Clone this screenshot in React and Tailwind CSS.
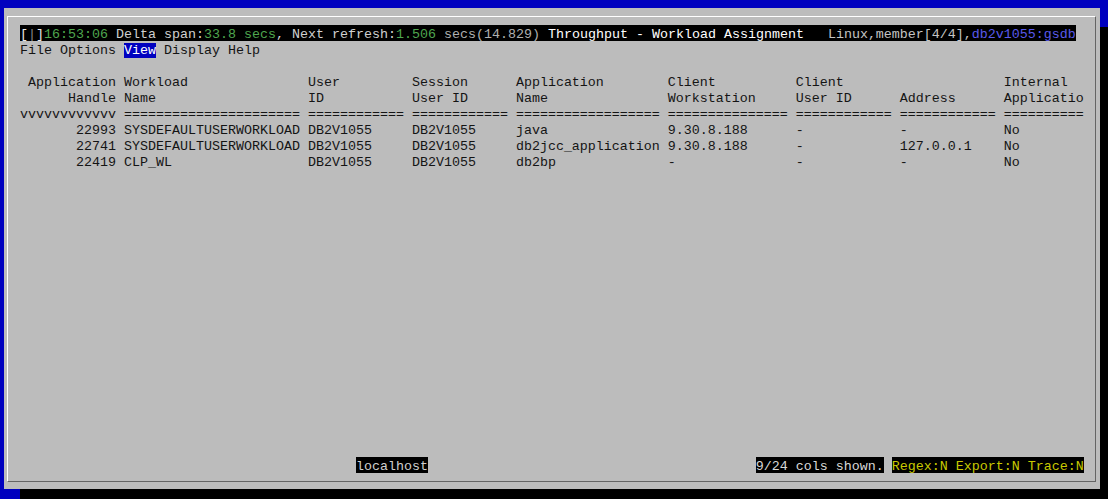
import React from "react";

const widths = [12, 22, 12, 12, 18, 15, 12, 12, 10];

function line(cells) {
  return cells
    .map((c, i) => (i === 0 ? String(c).padStart(widths[i]) : String(c).padEnd(widths[i])))
    .join(" ");
}

const h1 = line(["Application", "Workload", "User", "Session", "Application", "Client", "Client", "", "Internal"]);
const h2 = line(["Handle", "Name", "ID", "User ID", "Name", "Workstation", "User ID", "Address", "Applicatio"]);
const sep = ["vvvvvvvvvvvv", ...widths.slice(1).map((w) => "=".repeat(w))].join(" ");
const rows = [
  ["22993", "SYSDEFAULTUSERWORKLOAD", "DB2V1055", "DB2V1055", "java", "9.30.8.188", "-", "-", "No"],
  ["22741", "SYSDEFAULTUSERWORKLOAD", "DB2V1055", "DB2V1055", "db2jcc_application", "9.30.8.188", "-", "127.0.0.1", "No"],
  ["22419", "CLP_WL", "DB2V1055", "DB2V1055", "db2bp", "-", "-", "-", "No"],
].map(line);

export default function App() {
  return (
    <div className="w-[1108px] h-[499px] bg-[#0000bf] overflow-hidden pt-2 pl-1">
      <div className="w-[1096px] h-[481px] bg-[#bcbcbc] shadow-[16px_19px_0_0_#000] pt-2 pl-[3px] pr-[4px] pb-[7px]">
        <div className="h-full border border-t-white border-l-white border-r-[#646464] border-b-[#646464] pl-3 pt-2 pb-2 flex flex-col [font-family:'Liberation_Mono','Courier_New',monospace] text-[13.333px] leading-[20px] text-[#141414] whitespace-pre">
          <div className="h-4 flex">
            <span className="bg-black h-4 inline-block">
              <span className="text-[#e8e8e8]">[</span>
              <span className="text-[#8a8a8a]">|</span>
              <span className="text-[#e8e8e8]">]</span>
              <span className="text-[#4fa64f]">16:53:06</span>
              <span className="text-[#d0d0d0]"> Delta span:</span>
              <span className="text-[#4fa64f]">33.8 secs</span>
              <span className="text-[#d0d0d0]">, Next refresh:</span>
              <span className="text-[#4fa64f]">1.506</span>
              <span className="text-[#b0b0b0]"> secs(14.829)</span>
              <span className="text-white"> Throughput - Workload Assignment</span>
              <span className="text-[#c4c4c4]">   Linux,member[4/4],</span>
              <span className="text-[#5a5aea]">db2v1055:gsdb</span>
            </span>
          </div>
          <div className="h-4">
            File Options <span className="bg-[#0000c0] text-white">View</span> Display Help
          </div>
          <div className="h-4"> </div>
          <div className="h-4">{h1}</div>
          <div className="h-4">{h2}</div>
          <div className="h-4">{sep}</div>
          {rows.map((r, i) => (
            <div key={i} className="h-4">{r}</div>
          ))}
          <div className="flex-1" />
          <div className="h-4 flex">
            <span>{" ".repeat(42)}</span>
            <span className="bg-black text-[#cfcfcf] h-4 inline-block">localhost</span>
            <span>{" ".repeat(41)}</span>
            <span className="bg-black text-[#d8d8d8] h-4 inline-block">9/24 cols shown.</span>
            <span> </span>
            <span className="bg-black text-[#c8c800] h-4 inline-block">Regex:N Export:N Trace:N</span>
          </div>
        </div>
      </div>
    </div>
  );
}
